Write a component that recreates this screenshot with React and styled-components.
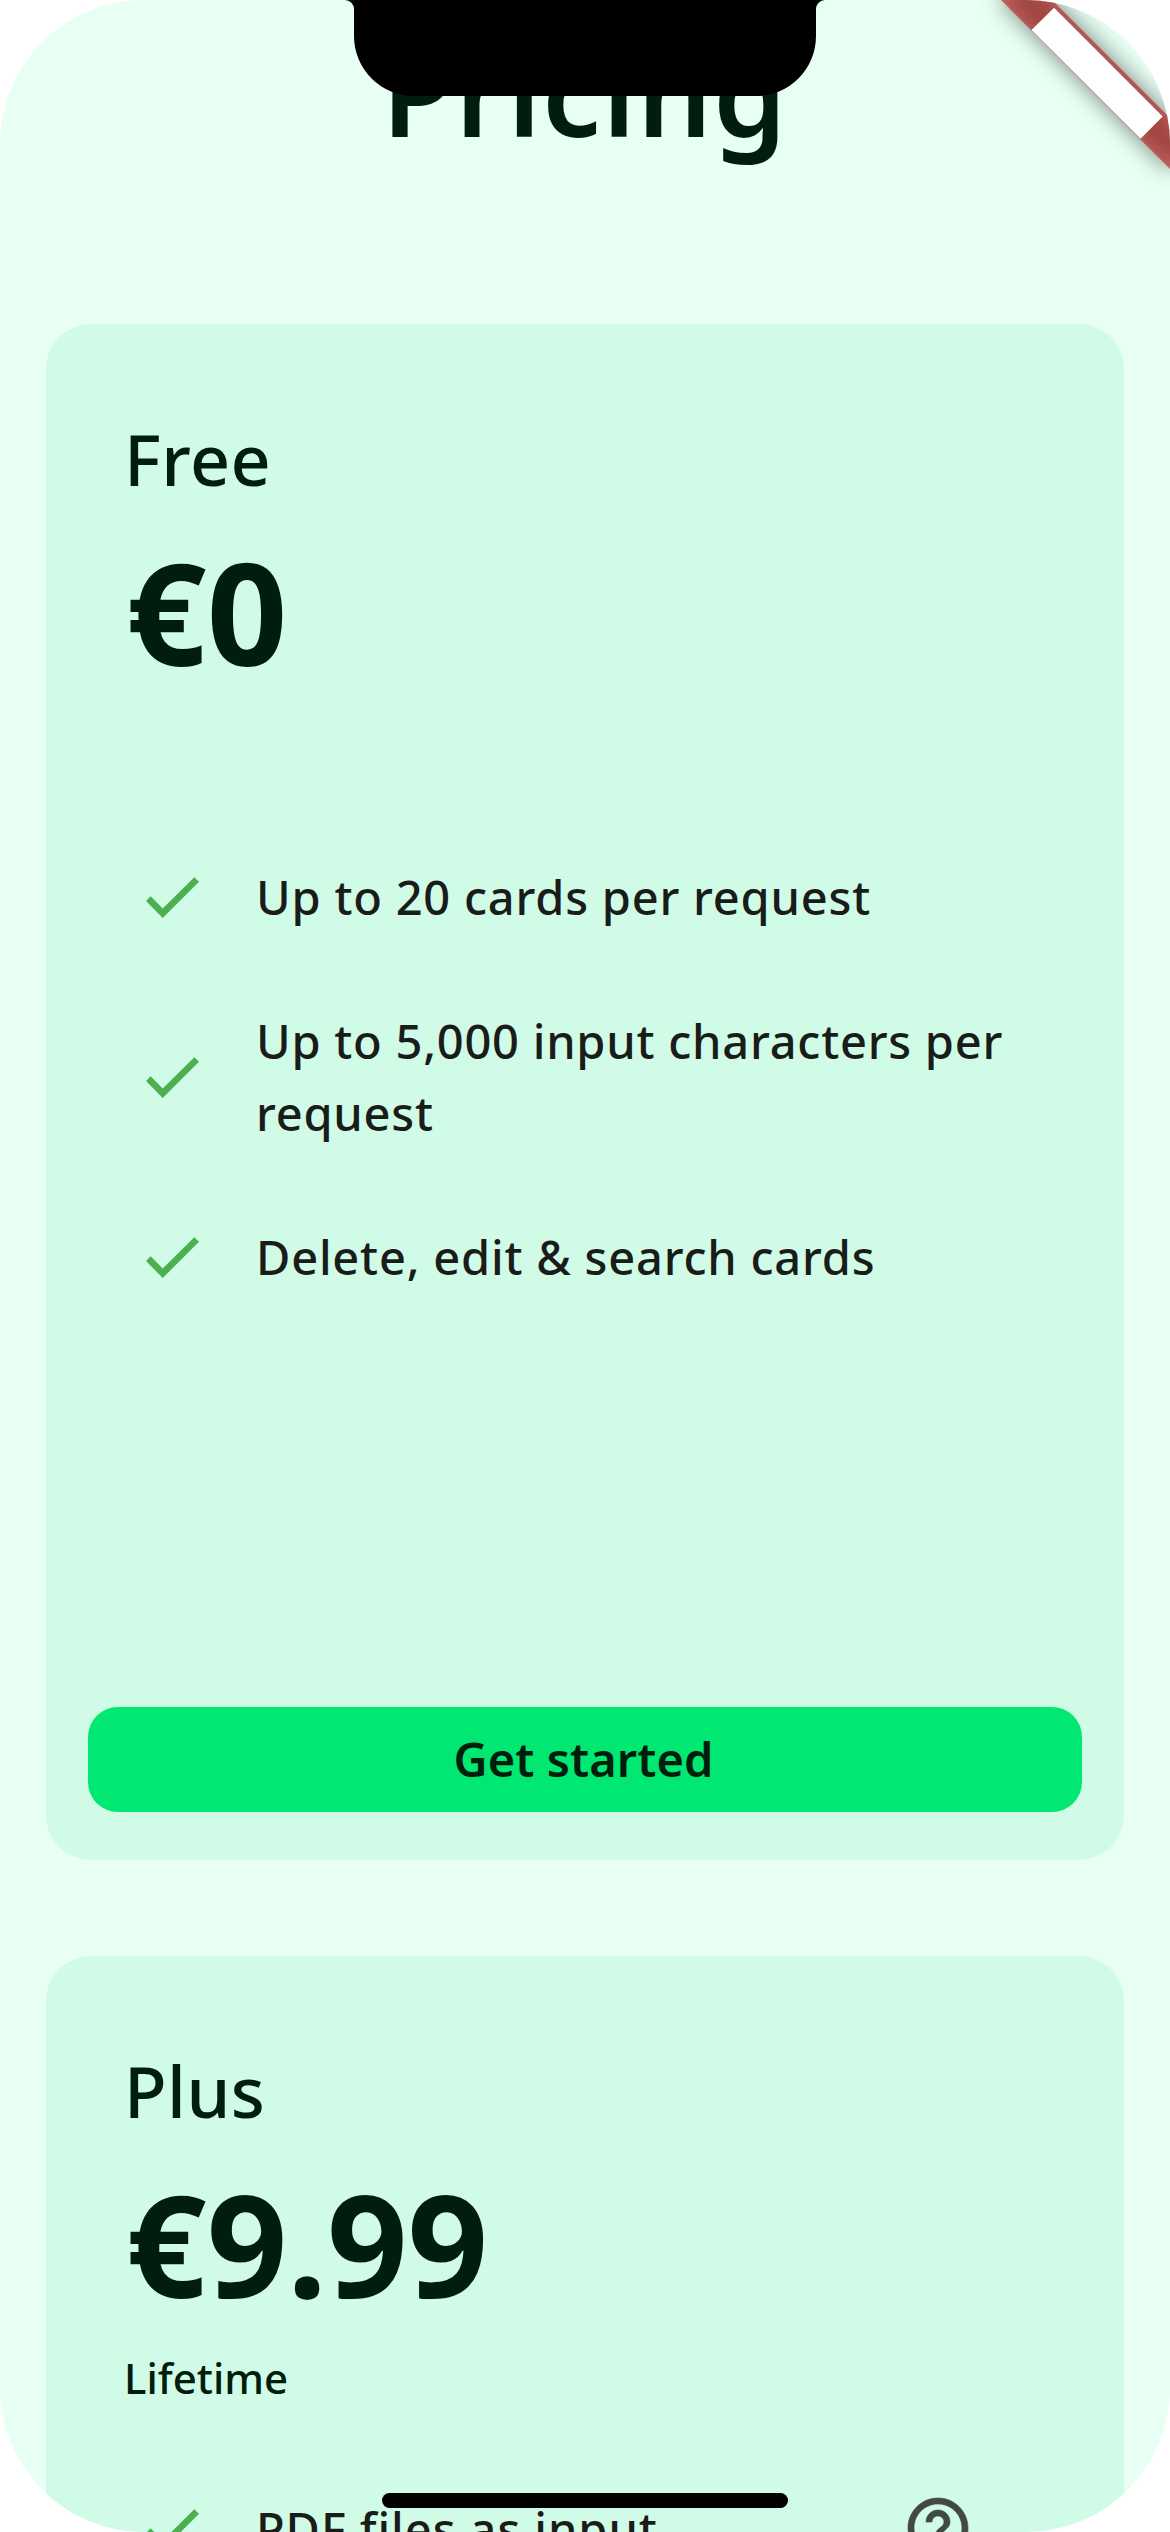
import React from 'react';
import styled, { createGlobalStyle } from 'styled-components';

const GlobalStyle = createGlobalStyle`
  * { box-sizing: border-box; }
  body { margin: 0; background: #ffffff; }
`;

const Screen = styled.main`
  position: relative;
  width: 1170px;
  height: 2532px;
  overflow: hidden;
  border-radius: 144px;
  background: #e8fff3;
  color: #001d0e;
  font-family: "Noto Sans", "Open Sans", sans-serif;
  font-weight: 500;
`;

const Page = styled.div`
  display: flex;
  flex-direction: column;
  padding: 22px 46px 0;
`;

const Title = styled.h1`
  margin: 0 0 162px;
  font-size: 117px;
  font-weight: 650;
  line-height: 140px;
  letter-spacing: 1.5px;
  text-align: center;
`;

const Plans = styled.div`
  display: flex;
  flex-direction: column;
  gap: 96px;
`;

const Card = styled.section`
  display: flex;
  flex-direction: column;
  flex-shrink: 0;
  height: 1536px;
  padding: 87px 42px 48px;
  border-radius: 45px;
  background: #d0fce7;
`;

const CardHeader = styled.header`
  display: flex;
  flex-direction: column;
  gap: 20px;
  margin-bottom: 85px;
  padding: 0 36px;
`;

const PlanName = styled.h2`
  margin: 0;
  font-size: 70px;
  font-weight: 500;
  line-height: 96px;
  letter-spacing: 0.4px;
`;

const Price = styled.div`
  margin-left: 2px;
  font-size: 141px;
  font-weight: 700;
  line-height: 168px;
`;

const Period = styled.div`
  height: 60px;
  font-size: 42px;
  line-height: 62px;
`;

const Features = styled.ul`
  display: flex;
  flex-direction: column;
  gap: 72px;
  margin: 0;
  padding: 0 36px 0 48px;
  list-style: none;
`;

const Feature = styled.li`
  display: flex;
  align-items: center;
  gap: 48px;
`;

const FeatureText = styled.span`
  flex: 1;
  color: #1a1c19;
  font-size: 47px;
  line-height: 72px;
  letter-spacing: ${(p) => p.$tracking ?? 0.78}px;
  padding-top: 1px;
  margin-bottom: -1px;
`;

const HelpSlot = styled.span`
  display: flex;
  margin-right: 72px;
`;

const Icon = styled.svg`
  display: block;
  flex: none;
  width: 72px;
  height: 72px;
  fill: ${(p) => p.$color};
  stroke: ${(p) => p.$color};
  stroke-width: ${(p) => p.$stroke ?? 0};
`;

const Button = styled.button`
  display: flex;
  align-items: center;
  justify-content: center;
  height: 105px;
  margin: auto 0 0;
  padding: 0 3px 2px 0;
  border: 0;
  border-radius: 30px;
  background: #00e871;
  color: #001d0e;
  font-family: inherit;
  font-size: 47px;
  font-weight: 620;
  letter-spacing: 0.1px;
`;

const Notch = styled.svg`
  position: absolute;
  top: 0;
  left: 345px;
  width: 480px;
  height: 96px;
`;

const Ribbon = styled.svg`
  position: absolute;
  top: 0;
  right: 0;
  width: 240px;
  height: 240px;
`;

const HomeBar = styled.div`
  position: absolute;
  top: 2493px;
  left: 382px;
  width: 406px;
  height: 15px;
  border-radius: 8px;
  background: #000000;
`;

const CheckIcon = () => (
  <Icon viewBox="0 0 24 24" $color="#4caf50">
    <path d="M3.35 13.65L4.88 12.1l4.02 4.1L19.45 5.75 21 7.25 8.9 19.35z" />
  </Icon>
);

const HelpIcon = () => (
  <Icon viewBox="0 0 24 24" $color="#424940" $stroke={0.22}>
    <path d="M11 18h2v-2h-2v2zm1-16C6.48 2 2 6.48 2 12s4.48 10 10 10 10-4.48 10-10S17.52 2 12 2zm0 18c-4.41 0-8-3.59-8-8s3.59-8 8-8 8 3.59 8 8-3.59 8-8 8zm0-14c-2.21 0-4 1.79-4 4h2c0-1.1.9-2 2-2s2 .9 2 2c0 2-3 1.75-3 5h2c0-2.25 3-2.5 3-5 0-2.21-1.79-4-4-4z" />
  </Icon>
);

const plans = [
  {
    name: 'Free',
    price: '€0',
    features: [
      { text: 'Up to 20 cards per request' },
      { text: 'Up to 5,000 input characters per request', tracking: 0.76 },
      { text: 'Delete, edit & search cards' },
    ],
    action: 'Get started',
  },
  {
    name: 'Plus',
    price: '€9.99',
    period: 'Lifetime',
    features: [{ text: 'PDF files as input', tracking: 0.93, help: true }],
  },
];

function PlanCard({ plan }) {
  return (
    <Card>
      <CardHeader>
        <PlanName>{plan.name}</PlanName>
        <Price>{plan.price}</Price>
        <Period>{plan.period}</Period>
      </CardHeader>
      <Features>
        {plan.features.map((f) => (
          <Feature key={f.text}>
            <CheckIcon />
            <FeatureText $tracking={f.tracking}>{f.text}</FeatureText>
            {f.help && (
              <HelpSlot>
                <HelpIcon />
              </HelpSlot>
            )}
          </Feature>
        ))}
      </Features>
      {plan.action && <Button>{plan.action}</Button>}
    </Card>
  );
}

export default function App() {
  return (
    <>
      <GlobalStyle />
      <Screen>
        <Page>
          <Title>Pricing</Title>
          <Plans>
            {plans.map((plan) => (
              <PlanCard key={plan.name} plan={plan} />
            ))}
          </Plans>
        </Page>
        <Ribbon viewBox="930 0 240 240">
          <defs>
            <filter id="soft" filterUnits="userSpaceOnUse" x="900" y="-120" width="400" height="400">
              <feGaussianBlur stdDeviation="11.9" />
            </filter>
          </defs>
          <polygon points="1001,0 1170,169 1195.5,143.5 1026.5,-25.5" fill="#000000" fillOpacity="0.5" filter="url(#soft)" />
          <polygon points="1001,0 1170,169 1195.5,143.5 1026.5,-25.5" fill="#b71c1c" fillOpacity="0.627" />
          <polygon points="1031.5,30 1054,7.8 1162.7,116.5 1140.5,138.7" fill="#ffffff" />
        </Ribbon>
        <Notch viewBox="345 0 480 96">
          <path d="M345 0a9 9 0 0 1 9 9V36a60 60 0 0 0 60 60H756a60 60 0 0 0 60-60V9a9 9 0 0 1 9-9z" />
        </Notch>
        <HomeBar />
      </Screen>
    </>
  );
}
